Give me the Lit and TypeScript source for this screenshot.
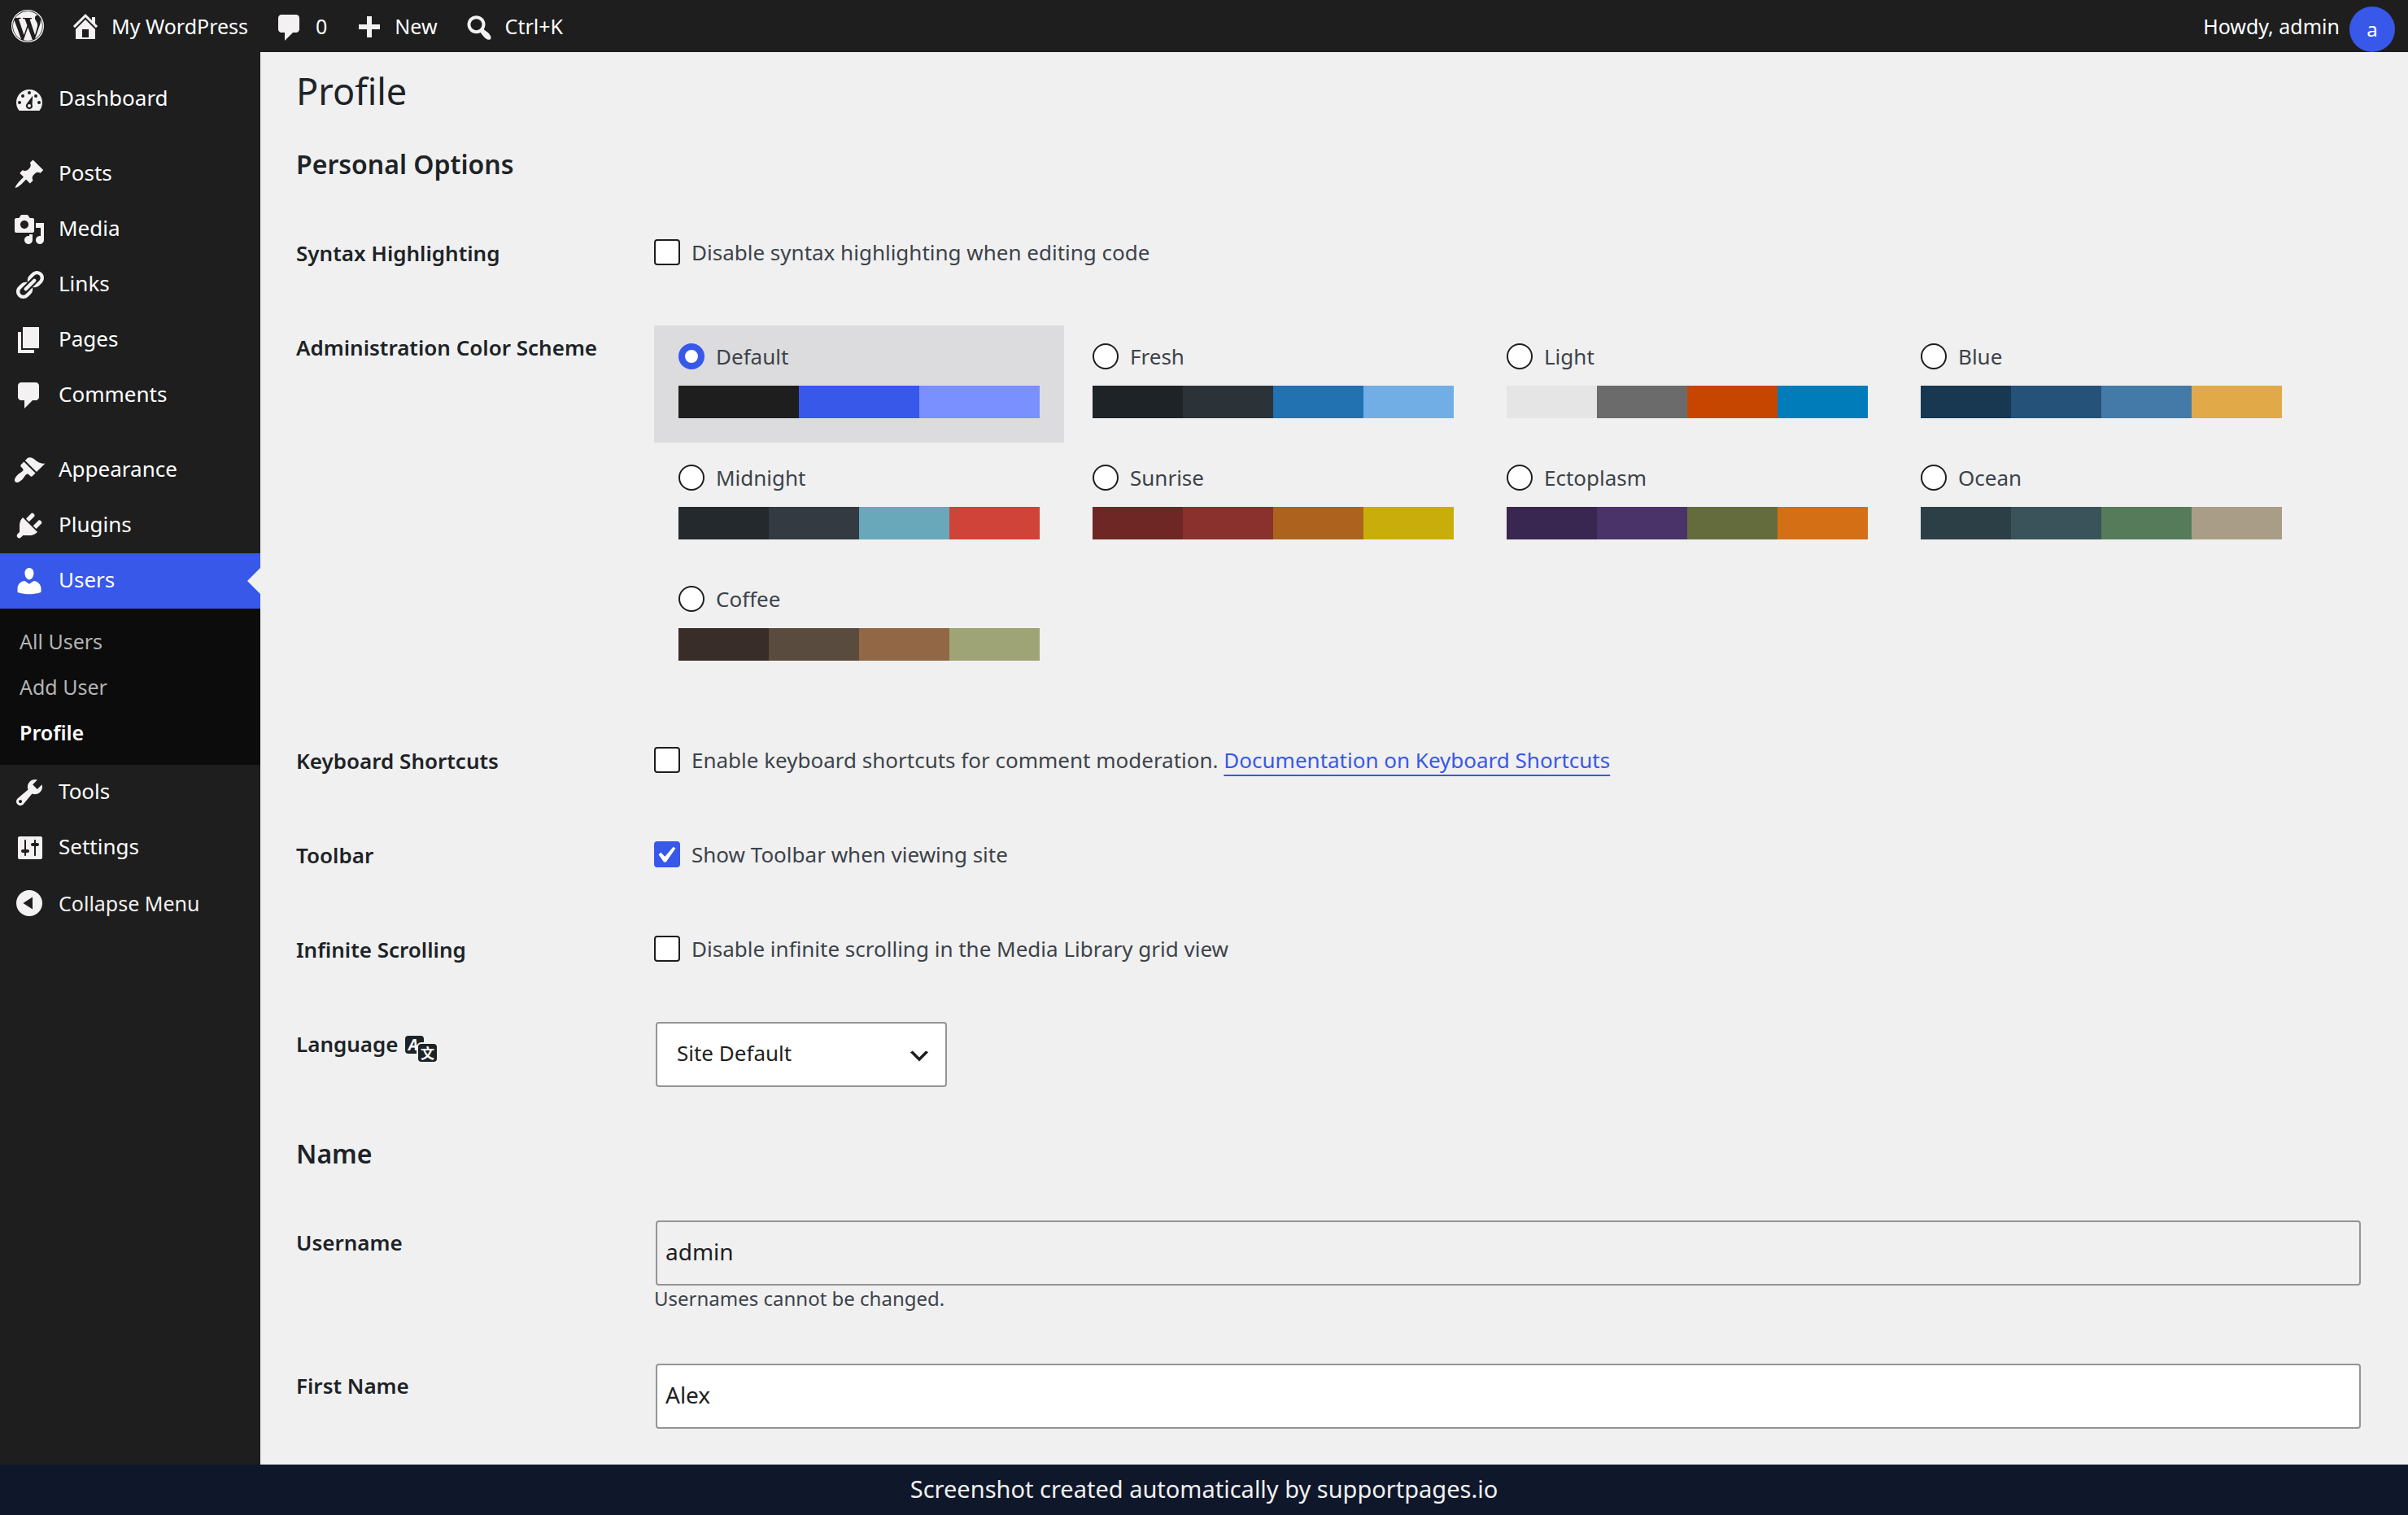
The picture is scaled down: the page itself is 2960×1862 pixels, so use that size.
import { LitElement, css, html, svg } from 'lit'
import { customElement, property, state } from 'lit/decorators.js'
import { classMap } from 'lit/directives/class-map.js'
import { styleMap } from 'lit/directives/style-map.js'

const icons = {
  wordpress: svg`
    <g transform="scale(0.8334)">
      <path d="M21.469 6.825c.84 1.537 1.318 3.3 1.318 5.175 0 3.979-2.156 7.456-5.363 9.325l3.295-9.527c.615-1.54.82-2.771.82-3.864 0-.405-.026-.78-.07-1.11m-7.981.105c.647-.03 1.232-.105 1.232-.105.582-.075.514-.93-.067-.899 0 0-1.755.135-2.88.135-1.064 0-2.85-.15-2.85-.15-.585-.03-.661.855-.075.885 0 0 .54.061 1.125.09l1.68 4.605-2.37 7.08L5.354 6.9c.649-.03 1.234-.1 1.234-.1.585-.075.516-.93-.065-.896 0 0-1.746.138-2.874.138-.2 0-.438-.008-.69-.015C4.911 3.15 8.235 1.215 12 1.215c2.809 0 5.365 1.072 7.286 2.833-.046-.003-.091-.009-.141-.009-1.06 0-1.812.923-1.812 1.914 0 .89.513 1.643 1.06 2.531.411.72.89 1.643.89 2.977 0 .915-.354 1.994-.821 3.479l-1.075 3.585-3.9-11.61zM12 22.784c-1.059 0-2.081-.153-3.048-.437l3.237-9.406 3.315 9.087c.024.053.05.101.078.149-1.12.393-2.325.609-3.582.609M1.211 12c0-1.564.336-3.05.935-4.39L7.29 21.709C3.694 19.96 1.212 16.271 1.211 12"/>
      <circle cx="12" cy="12" r="11.6" fill="none" stroke="currentColor" stroke-width="0.8"/>
    </g>`,
  home: svg`<path d="M16 8.5l1.53 1.53-1.06 1.06L10 4.6l-6.47 6.49-1.06-1.06L10 2.5l4 4v-2h2v4zm-6-2.46l6 5.99V18H4v-5.97zM12 17v-5H8v5h4z"/>`,
  plus: svg`<path d="M17 9v3h-5v5H9v-5H4V9h5V4h3v5h5z"/>`,
  search: svg`<path transform="translate(0 1)" d="M12.14 4.18c1.87 1.87 2.11 4.75.72 6.89.12.1.22.21.36.31.2.16.47.36.81.59.34.24.56.39.66.47.42.31.73.57.94.78.32.32.6.65.84 1 .25.35.44.69.59 1.04.14.35.21.68.18 1-.02.32-.14.59-.36.81s-.49.34-.81.36c-.31.02-.65-.04-.99-.19-.35-.14-.7-.34-1.04-.59-.35-.24-.68-.52-1-.84-.21-.21-.47-.52-.77-.93-.1-.13-.25-.35-.47-.66-.22-.32-.4-.57-.56-.78-.16-.2-.29-.35-.44-.5-2.07 1.09-4.69.76-6.44-.98-2.14-2.15-2.14-5.64 0-7.78 2.15-2.15 5.63-2.15 7.78 0zm-1.41 6.36c1.36-1.37 1.36-3.58 0-4.95-1.37-1.37-3.59-1.37-4.95 0-1.37 1.37-1.37 3.58 0 4.95 1.36 1.37 3.58 1.37 4.95 0z"/>`,
  bubble: svg`<path transform="translate(0 1)" d="M5 2h9c1.1 0 2 .9 2 2v7c0 1.1-.9 2-2 2h-2l-5 5v-5H5c-1.1 0-2-.9-2-2V4c0-1.1.9-2 2-2z"/>`,
  dashboard: svg`<path d="M3.76 17h12.48c1.1-1.37 1.76-3.11 1.76-5 0-4.42-3.58-8-8-8s-8 3.58-8 8c0 1.89.66 3.63 1.76 5zM10 5a1 1 0 1 1 0 2 1 1 0 0 1 0-2zM6 7a1 1 0 1 1 0 2 1 1 0 0 1 0-2zM14 7a1 1 0 1 1 0 2 1 1 0 0 1 0-2zM4 11a1 1 0 1 1 0 2 1 1 0 0 1 0-2zM16 11a1 1 0 1 1 0 2 1 1 0 0 1 0-2zM12.1 7.9l-.3 5.3a2 2 0 1 1-3.4-.4zM10 13a1 1 0 1 0 0 2 1 1 0 0 0 0-2z"/>`,
  posts: svg`<path d="M10.44 3.02l1.82-1.82 6.36 6.35-1.83 1.82c-1.05-.68-2.48-.57-3.41.36l-.75.75c-.92.93-1.04 2.35-.35 3.41l-1.83 1.82-2.41-2.41-2.8 2.79c-.42.42-3.38 2.71-3.8 2.29s1.86-3.39 2.28-3.81l2.79-2.79L4.1 9.36l1.83-1.82c1.05.69 2.48.57 3.4-.36l.75-.75c.93-.92 1.05-2.35.36-3.41z"/>`,
  media: svg`<path d="M13 11V4c0-.55-.45-1-1-1h-1.67L9 1H5L3.67 3H2c-.55 0-1 .45-1 1v7c0 .55.45 1 1 1h10c.55 0 1-.45 1-1zM7 4.5c1.38 0 2.5 1.12 2.5 2.5S8.38 9.5 7 9.5 4.5 8.38 4.5 7 5.62 4.5 7 4.5zM14 6h5v10.5c0 1.38-1.12 2.5-2.5 2.5S14 17.88 14 16.5s1.12-2.5 2.5-2.5c.17 0 .34.02.5.05V9h-3V6zm-4 8.05V13h2v3.5c0 1.38-1.12 2.5-2.5 2.5S7 17.88 7 16.5 8.12 14 9.5 14c.17 0 .34.02.5.05z"/>`,
  links: svg`<path d="M17.74 2.76c1.68 1.69 1.68 4.41 0 6.1l-1.53 1.52c-1.12 1.12-2.7 1.47-4.14 1.09l2.62-2.61.76-.77.76-.76c.84-.84.84-2.2 0-3.04-.84-.85-2.2-.85-3.04 0l-.77.76-3.38 3.38c-.37-1.44-.02-3.02 1.1-4.14l1.52-1.53c1.69-1.68 4.42-1.68 6.1 0zM8.59 13.43l5.34-5.34c.42-.42.42-1.1 0-1.52-.44-.43-1.13-.39-1.53 0l-5.33 5.34c-.42.42-.42 1.1 0 1.52.44.43 1.13.39 1.52 0zm-.76 2.29l4.14-4.15c.38 1.44.03 3.02-1.09 4.14l-1.52 1.53c-1.69 1.68-4.41 1.68-6.1 0-1.68-1.68-1.68-4.42 0-6.1l1.53-1.52c1.12-1.12 2.7-1.47 4.14-1.1l-4.14 4.15c-.85.84-.85 2.2 0 3.05.84.84 2.2.84 3.04 0z"/>`,
  pages: svg`<path d="M6 15V2h10v13H6zm-1 1h8v2H3V5h2v11z"/>`,
  comments: svg`<path d="M5 2h9c1.1 0 2 .9 2 2v7c0 1.1-.9 2-2 2h-2l-5 5v-5H5c-1.1 0-2-.9-2-2V4c0-1.1.9-2 2-2z"/>`,
  appearance: svg`<path d="M14.48 11.06L7.41 3.99l1.5-1.5c.5-.56 2.3-.47 3.51.32 1.21.8 1.43 1.28 2.91 2.1 1.18.64 2.45 1.26 4.45.85zm-.71.71L6.7 4.7 4.93 6.47c-.39.39-.39 1.02 0 1.41l1.06 1.06c.39.39.39 1.03 0 1.42-.6.6-1.43 1.11-2.21 1.69-.35.26-.7.53-1.01.84C1.43 14.23.4 16.08 1.4 17.07c.99 1 2.84-.03 4.18-1.36.31-.31.58-.66.85-1.02.57-.78 1.08-1.61 1.69-2.21.39-.39 1.02-.39 1.41 0l1.06 1.06c.39.39 1.02.39 1.41 0z"/>`,
  plugins: svg`<path d="M13.11 4.36L9.87 7.6 8 5.73l3.24-3.24c.35-.34 1.05-.2 1.56.32.52.51.66 1.21.31 1.55zm-8 1.77l.91-1.12 9.01 9.01-1.19.84c-.71.71-2.63 1.16-3.82 1.16H6.14L4.9 17.26c-.59.59-1.54.59-2.12 0-.59-.58-.59-1.53 0-2.12l1.24-1.24v-3.88c0-1.13.4-3.19 1.09-3.89zm7.26 3.97l3.24-3.24c.34-.35 1.04-.21 1.55.31.52.51.66 1.21.31 1.55l-3.24 3.25z"/>`,
  users: svg`<path d="M10 9.25c-2.27 0-2.73-3.44-2.73-3.44C7 4.02 7.82 2 9.97 2c2.16 0 2.98 2.02 2.71 3.81 0 0-.41 3.44-2.68 3.44zm0 2.57L12.72 10c2.39 0 4.52 2.33 4.52 4.53v2.49s-3.65 1.13-7.24 1.13c-3.65 0-7.24-1.13-7.24-1.13v-2.49c0-2.25 1.94-4.48 4.47-4.48z"/>`,
  tools: svg`<path d="M16.68 9.77c-1.34 1.34-3.3 1.67-4.95.99l-5.41 6.52c-.99.99-2.59.99-3.58 0s-.99-2.59 0-3.57l6.52-5.42c-.68-1.65-.35-3.61.99-4.95 1.28-1.28 3.12-1.62 4.72-1.06l-2.89 2.89 2.82 2.82 2.86-2.87c.53 1.58.18 3.39-1.08 4.65zM3.81 16.21c.4.39 1.04.39 1.43 0 .4-.4.4-1.04 0-1.43-.39-.4-1.03-.4-1.43 0-.39.39-.39 1.03 0 1.43z"/>`,
  settings: svg`<path d="M18 16V4c0-.55-.45-1-1-1H4c-.55 0-1 .45-1 1v12c0 .55.45 1 1 1h13c.55 0 1-.45 1-1zM8 11h1c.55 0 1 .45 1 1s-.45 1-1 1H8v1.5c0 .28-.22.5-.5.5s-.5-.22-.5-.5V13H6c-.55 0-1-.45-1-1s.45-1 1-1h1V5.5c0-.28.22-.5.5-.5s.5.22.5.5V11zm5-2h-1c-.55 0-1-.45-1-1s.45-1 1-1h1V5.5c0-.28.22-.5.5-.5s.5.22.5.5V7h1c.55 0 1 .45 1 1s-.45 1-1 1h-1v5.5c0 .28-.22.5-.5.5s-.5-.22-.5-.5V9z"/>`,
  collapse: svg`<path d="M10 2a8 8 0 1 1 0 16 8 8 0 0 1 0-16zM12 6.2L6.2 10l5.8 3.8z"/>`,
}

type IconName = keyof typeof icons

const menu: { icon: IconName; label: string; gap?: boolean; children?: string[] }[] = [
  { icon: 'dashboard', label: 'Dashboard' },
  { icon: 'posts', label: 'Posts', gap: true },
  { icon: 'media', label: 'Media' },
  { icon: 'links', label: 'Links' },
  { icon: 'pages', label: 'Pages' },
  { icon: 'comments', label: 'Comments' },
  { icon: 'appearance', label: 'Appearance', gap: true },
  { icon: 'plugins', label: 'Plugins' },
  { icon: 'users', label: 'Users', children: ['All Users', 'Add User', 'Profile'] },
  { icon: 'tools', label: 'Tools' },
  { icon: 'settings', label: 'Settings' },
]

const schemes = [
  { name: 'Default', colors: ['#1e1e1e', '#3858e9', '#7b90ff'] },
  { name: 'Fresh', colors: ['#1d2327', '#2c3338', '#2271b1', '#72aee6'] },
  { name: 'Light', colors: ['#e5e5e5', '#6b6b6b', '#c64600', '#007cba'] },
  { name: 'Blue', colors: ['#183751', '#255279', '#437aa8', '#e1a948'] },
  { name: 'Midnight', colors: ['#23292c', '#343a42', '#69a8bb', '#cf4339'] },
  { name: 'Sunrise', colors: ['#6e2724', '#8a302d', '#ad631e', '#c9ae0b'] },
  { name: 'Ectoplasm', colors: ['#392751', '#4a3369', '#646c3d', '#d46f15'] },
  { name: 'Ocean', colors: ['#2c3f46', '#3a535b', '#567b5a', '#aa9d88'] },
  { name: 'Coffee', colors: ['#382d28', '#5a4b3f', '#916745', '#9ea476'] },
]

/**
 * wp-icon
 */
@customElement('wp-icon')
export class WpIcon extends LitElement {
  @property() name: IconName = 'dashboard'

  render() {
    return html`<svg viewBox="0 0 20 20" aria-hidden="true">${icons[this.name]}</svg>`
  }

  static styles = css`
    :host {
      display: block;
      flex: none;
      width: 40px;
      height: 40px;
    }

    svg {
      display: block;
      width: 100%;
      height: 100%;
      fill: currentColor;
      fill-rule: evenodd;
    }
  `
}

/**
 * wp-toolbar
 */
@customElement('wp-toolbar')
export class WpToolbar extends LitElement {
  render() {
    return html`
      <nav aria-label="Toolbar">
        <a href="#about" aria-label="About WordPress"><wp-icon name="wordpress"></wp-icon></a>
        <a href="#site"><wp-icon name="home"></wp-icon>My WordPress</a>
        <a href="#comments"><wp-icon name="bubble"></wp-icon>0</a>
        <a href="#new"><wp-icon name="plus"></wp-icon>New</a>
        <button type="button"><wp-icon name="search"></wp-icon>Ctrl+K</button>
      </nav>
      <a class="account" href="#profile">Howdy, admin<span class="avatar">a</span></a>
    `
  }

  static styles = css`
    :host {
      display: flex;
      justify-content: space-between;
      height: 64px;
      padding: 0 16px 0 14px;
      background: #1e1e1e;
    }

    nav {
      display: flex;
      gap: 31px;
    }

    a,
    button {
      display: flex;
      align-items: center;
      gap: 12px;
      padding: 0;
      border: 0;
      background: none;
      color: #fff;
      font: inherit;
      font-size: 25px;
      text-decoration: none;
    }

    wp-icon {
      color: #f3f1f1;
    }

    .avatar {
      align-self: flex-end;
      width: 56px;
      height: 56px;
      border-radius: 50%;
      background: #3858e9;
      font-size: 24px;
      line-height: 56px;
      text-align: center;
    }
  `
}

/**
 * wp-menu
 */
@customElement('wp-menu')
export class WpMenu extends LitElement {
  @state() private current = 'Users'
  @state() private page = 'Profile'

  render() {
    return html`
      <nav aria-label="Main menu">
        <ul>
          ${menu.map(
            (item) => html`
              <li class=${classMap({ gap: !!item.gap })}>
                <a
                  class=${classMap({ item: true, current: item.label === this.current })}
                  href="#${item.icon}"
                  ><wp-icon name=${item.icon}></wp-icon><span class="label">${item.label}</span></a
                >
                ${item.children
                  ? html`<ul class="submenu">
                      ${item.children.map(
                        (child) =>
                          html`<li>
                            <a class=${classMap({ active: child === this.page })} href="#users"
                              >${child}</a
                            >
                          </li>`
                      )}
                    </ul>`
                  : ''}
              </li>
            `
          )}
        </ul>
        <button class="item collapse" type="button">
          <wp-icon name="collapse"></wp-icon>Collapse Menu
        </button>
      </nav>
    `
  }

  static styles = css`
    :host {
      display: block;
      flex: none;
      width: 320px;
      padding-top: 24px;
      box-sizing: border-box;
      background: #1e1e1e;
    }

    ul {
      margin: 0;
      padding: 0;
      list-style: none;
    }

    .gap {
      margin-top: 24px;
    }

    .item {
      position: relative;
      display: flex;
      align-items: center;
      gap: 16px;
      width: 100%;
      height: 68px;
      padding: 0 16px;
      box-sizing: border-box;
      border: 0;
      background: none;
      color: #fff;
      font: inherit;
      font-size: 26px;
      text-decoration: none;
    }

    .label {
      padding-bottom: 4px;
    }

    wp-icon {
      color: #f3f1f1;
    }

    .current {
      background: #3858e9;
    }

    .current wp-icon {
      color: #fff;
    }

    .current::after {
      content: '';
      position: absolute;
      top: 18px;
      right: 0;
      border: 16px solid transparent;
      border-left-width: 0;
      border-right-color: #f0f0f0;
    }

    .submenu {
      padding: 12px 0;
      background: #0c0c0c;
    }

    .submenu a {
      display: block;
      padding: 0 24px;
      color: #b4b4b4;
      font-size: 25px;
      line-height: 56px;
      text-decoration: none;
    }

    .submenu .active {
      color: #fff;
      font-weight: 600;
    }

    .collapse {
      color: #f3f1f1;
      font-size: 25px;
    }
  `
}

/**
 * wp-profile
 */
@customElement('wp-profile')
export class WpProfile extends LitElement {
  @state() private scheme = 'Default'

  render() {
    return html`
      <h1>Profile</h1>

      <h2>Personal Options</h2>
      <div class="row">
        <div class="head">Syntax Highlighting</div>
        <label class="check">
          <input type="checkbox" />
          <span>Disable syntax highlighting when editing code</span>
        </label>
      </div>
      <div class="row">
        <div class="head" id="scheme-label">Administration Color Scheme</div>
        <div class="schemes" role="radiogroup" aria-labelledby="scheme-label">
          ${schemes.map(
            ({ name, colors }) => html`
              <label class=${classMap({ scheme: true, selected: name === this.scheme })}>
                <span class="name">
                  <input
                    type="radio"
                    name="admin_color"
                    .checked=${name === this.scheme}
                    @change=${() => (this.scheme = name)}
                  />
                  ${name}
                </span>
                <span class="palette">
                  ${colors.map((color) => html`<i style=${styleMap({ background: color })}></i>`)}
                </span>
              </label>
            `
          )}
        </div>
      </div>
      <div class="row">
        <div class="head">Keyboard Shortcuts</div>
        <div class="check">
          <input type="checkbox" id="shortcuts" />
          <span>
            <label for="shortcuts">Enable keyboard shortcuts for comment moderation.</label>
            <a href="#shortcuts">Documentation on Keyboard Shortcuts</a>
          </span>
        </div>
      </div>
      <div class="row">
        <div class="head">Toolbar</div>
        <label class="check">
          <input type="checkbox" checked />
          <span>Show Toolbar when viewing site</span>
        </label>
      </div>
      <div class="row">
        <div class="head">Infinite Scrolling</div>
        <label class="check">
          <input type="checkbox" />
          <span>Disable infinite scrolling in the Media Library grid view</span>
        </label>
      </div>
      <div class="row">
        <label class="head" for="locale">
          Language
          <svg class="translate" viewBox="0 0 40 40" aria-hidden="true">
            <path
              d="M4 8h15a4 4 0 0 1 4 4v4h-3a6 6 0 0 0-6 6v8H4a4 4 0 0 1-4-4V12a4 4 0 0 1 4-4z"
            />
            <rect x="16" y="18" width="23" height="22" rx="4" />
            <text x="4" y="26" font-size="19" font-style="italic">A</text>
            <text x="19" y="36" font-size="17">文</text>
          </svg>
        </label>
        <div>
          <select id="locale">
            <option>Site Default</option>
          </select>
        </div>
      </div>

      <h2>Name</h2>
      <div class="row">
        <label class="head" for="username">Username</label>
        <div>
          <input class="text" type="text" id="username" value="admin" disabled />
          <p>Usernames cannot be changed.</p>
        </div>
      </div>
      <div class="row">
        <label class="head" for="first-name">First Name</label>
        <div><input class="text" type="text" id="first-name" value="Alex" /></div>
      </div>
    `
  }

  static styles = css`
    :host {
      display: block;
      flex: 1;
      min-width: 0;
      padding: 18px 56px 0 44px;
      background: #f0f0f0;
      color: #3c434a;
      font-size: 26px;
    }

    h1,
    h2 {
      color: #1d2327;
    }

    h1 {
      margin: 0 0 38px;
      font-size: 45px;
      font-weight: 400;
      line-height: 60px;
    }

    h2 {
      margin: 26px 0 30px;
      font-size: 32px;
      font-weight: 600;
      line-height: 44px;
    }

    .row {
      display: grid;
      grid-template-columns: 440px minmax(0, 1fr);
      padding: 30px 0 34px;
    }

    .head {
      display: flex;
      gap: 8px;
      align-items: flex-start;
      padding-top: 9px;
      color: #1d2327;
      font-weight: 600;
      line-height: 36px;
    }

    .check {
      display: flex;
      align-items: center;
      gap: 14px;
      height: 52px;
    }

    input,
    select {
      margin: 0;
      appearance: none;
      box-sizing: border-box;
      font: inherit;
    }

    [type='checkbox'],
    [type='radio'] {
      flex: none;
      width: 32px;
      height: 32px;
      border: 2px solid #1e1e1e;
      border-radius: 4px;
      background: #fff;
    }

    [type='checkbox']:checked {
      border-color: #3858e9;
      background: #3858e9
        url("data:image/svg+xml,%3Csvg xmlns='http://www.w3.org/2000/svg' viewBox='0 0 20 20'%3E%3Cpath d='M14.83 4.89l1.34.94-5.81 8.38H9.02L5.78 9.67l1.34-1.25 2.57 2.4z' fill='%23fff'/%3E%3C/svg%3E")
        no-repeat -6px -3px / 40px 40px border-box;
    }

    [type='radio'] {
      border-radius: 50%;
    }

    [type='radio']:checked {
      border: 8px solid #3858e9;
    }

    a {
      color: #3858e9;
      text-decoration: underline 2px;
      text-decoration-skip-ink: none;
      text-underline-offset: 8px;
    }

    .schemes {
      display: flex;
      flex-wrap: wrap;
      gap: 5px;
      padding-bottom: 2px;
    }

    .scheme {
      display: flex;
      flex-direction: column;
      gap: 18px;
      width: 24%;
      padding: 20px 30px 30px;
      box-sizing: border-box;
    }

    .selected {
      background: #dcdcde;
    }

    .name {
      display: flex;
      align-items: center;
      gap: 14px;
      height: 36px;
    }

    .palette {
      display: flex;
      height: 40px;
    }

    .palette i {
      flex: 1;
    }

    .translate {
      width: 40px;
      height: 40px;
      margin-bottom: -4px;
      fill: #1d2327;
    }

    .translate text {
      fill: #fff;
      font-family: 'Noto Sans', 'Noto Sans CJK SC', sans-serif;
      font-weight: 700;
    }

    select,
    .text {
      display: block;
      height: 80px;
      border: 2px solid #949494;
      border-radius: 4px;
      background: #fff;
      color: #1e1e1e;
    }

    select {
      width: 358px;
      margin: 0 2px;
      padding: 0 64px 4px 24px;
      background: #fff
        url("data:image/svg+xml,%3Csvg xmlns='http://www.w3.org/2000/svg' viewBox='0 0 20 20'%3E%3Cpath d='M5 6l5 5 5-5 2 1-7 7-7-7 2-1z' fill='%231e1e1e'/%3E%3C/svg%3E")
        no-repeat right 16px top 24px / 32px 32px;
    }

    .text {
      width: calc(100% - 4px);
      margin: 0 2px;
      padding: 0 10px 4px;
      font-size: 28px;
    }

    .text:disabled {
      background: #f0f0f0;
    }

    p {
      margin: 0;
      font-size: 24px;
      line-height: 32px;
    }
  `
}

/**
 * app-root
 */
@customElement('app-root')
export class AppRoot extends LitElement {
  render() {
    return html`
      <wp-toolbar></wp-toolbar>
      <main>
        <wp-menu></wp-menu>
        <wp-profile></wp-profile>
      </main>
      <footer>Screenshot created automatically by supportpages.io</footer>
    `
  }

  static styles = css`
    :host {
      display: flex;
      flex-direction: column;
      min-height: 100vh;
      font-family: 'Noto Sans', sans-serif;
    }

    main {
      display: flex;
      flex: 1;
    }

    footer {
      padding-bottom: 2px;
      background: #0f172a;
      color: #f1f1f1;
      font-size: 29px;
      line-height: 60px;
      text-align: center;
    }
  `
}
